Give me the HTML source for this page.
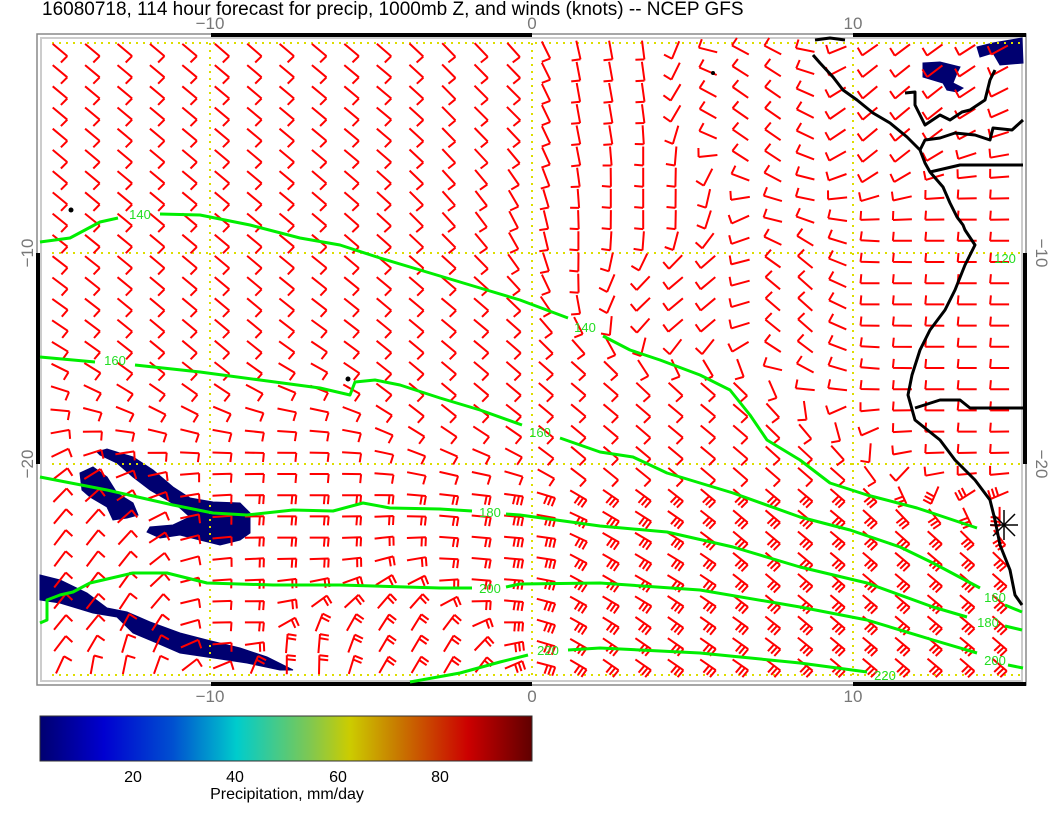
<!DOCTYPE html>
<html><head><meta charset="utf-8"><style>
html,body{margin:0;padding:0;background:#fff;width:1056px;height:816px;overflow:hidden;font-family:"Liberation Sans",sans-serif}
svg{position:absolute;left:0;top:0}
</style></head><body>
<svg id="s" width="1056" height="816" viewBox="0 0 1056 816" xmlns="http://www.w3.org/2000/svg">
<defs><linearGradient id="cb" x1="0" x2="1" y1="0" y2="0">
<stop offset="0" stop-color="#000070"/><stop offset="0.13" stop-color="#0000d0"/><stop offset="0.27" stop-color="#0050d0"/><stop offset="0.4" stop-color="#00cccc"/><stop offset="0.55" stop-color="#80c850"/><stop offset="0.63" stop-color="#cccc00"/><stop offset="0.72" stop-color="#c88000"/><stop offset="0.87" stop-color="#cc0000"/><stop offset="1" stop-color="#600000"/></linearGradient></defs>
<text x="42" y="15" font-size="19" fill="#000">16080718, 114 hour forecast for precip, 1000mb Z, and winds (knots) -- NCEP GFS</text>
<g font-size="17" fill="#777" text-anchor="middle">
<text x="210" y="29">−10</text><text x="532" y="29">0</text><text x="853" y="29">10</text>
<text x="210" y="702">−10</text><text x="532" y="702">0</text><text x="853" y="702">10</text>
<text transform="translate(33,253) rotate(-90)">−10</text><text transform="translate(33,464) rotate(-90)">−20</text>
<text transform="translate(1036,253) rotate(90)">−10</text><text transform="translate(1036,464) rotate(90)">−20</text>
</g>
<rect x="37" y="34" width="989" height="651" fill="none" stroke="#888" stroke-width="1.5"/>
<rect x="41" y="38" width="981" height="643" fill="none" stroke="#ccc" stroke-width="2"/>
<g fill="#000"><rect x="211" y="33" width="321" height="4"/><rect x="853" y="33" width="173" height="4"/>
<rect x="211" y="682" width="321" height="4"/><rect x="853" y="682" width="173" height="4"/>
<rect x="36" y="253" width="4" height="211"/><rect x="1023" y="253" width="4" height="211"/></g>
<g fill="#000070" stroke="#000070">
<polygon points="97,452 107,449 133,457 153,470 173,487 190,498 213,502 240,503 250,513 250,533 240,540 220,545 200,540 180,535 160,538 147,532 150,527 173,525 190,517 180,508 167,500 150,490 133,477 117,463 100,455"/>
<polygon points="80,473 93,467 107,477 117,493 133,503 138,515 127,518 113,520 107,507 90,497 82,490"/>
<polygon points="40,575 60,580 87,593 107,608 127,612 150,622 180,633 207,640 240,648 267,657 293,670 280,670 247,663 207,657 180,653 157,643 133,633 117,617 93,613 60,603 40,600"/>
<polygon points="923,63 940,62 960,67 957,73 953,83 963,88 957,92 947,90 943,83 933,80 923,77"/>
<polygon points="977,47 993,43 1022,38 1023,63 1000,65 993,53 980,57"/>
</g>
<g stroke="#dddd00" stroke-width="2" stroke-dasharray="2,5" fill="none">
<line x1="52" y1="43" x2="1020" y2="43"/><line x1="52" y1="253" x2="1020" y2="253"/><line x1="52" y1="464" x2="1020" y2="464"/><line x1="52" y1="675" x2="1020" y2="675"/>
<line x1="210" y1="43" x2="210" y2="675"/><line x1="532" y1="43" x2="532" y2="675"/><line x1="853" y1="43" x2="853" y2="675"/>
</g>
<g id="barbs" stroke="#ff0000" stroke-width="2" fill="none"></g>
<g stroke="#00ee00" stroke-width="3" fill="none" stroke-linejoin="round">
<polyline points="40,242 70,238 100,222 118,218"/>
<polyline points="160,214 200,215 250,225 300,238 340,245 380,258 420,270 470,285 520,300 568,318"/>
<polyline points="603,336 630,350 660,360 700,375 730,390 750,415 767,440 800,460 830,483 867,495 917,508 977,528"/>
<polyline points="40,357 95,362"/>
<polyline points="135,365 200,372 260,380 320,388 350,395 355,382 375,380 400,385 440,398 480,410 522,425"/>
<polyline points="560,438 600,452 633,457 667,473 733,493 800,517 850,530 900,547 933,563 980,588"/>
<polyline points="1005,605 1022,612"/>
<polyline points="40,477 107,490 173,505 213,513 247,515 293,510 333,511 363,503 390,508 440,509 472,511"/>
<polyline points="506,514 520,515 600,526 667,532 733,547 800,567 867,583 933,607 967,617"/>
<polyline points="1005,626 1022,630"/>
<polyline points="40,623 47,620 47,600 60,595 73,592 90,583 133,573 167,573 207,583 273,585 340,585 440,588 472,588"/>
<polyline points="506,587 520,584 600,583 700,590 800,607 867,620 933,640 977,653"/>
<polyline points="1008,665 1023,668"/>
<polyline points="410,682 460,673 500,662 528,655"/>
<polyline points="568,650 600,648 700,653 800,663 867,672"/>
</g>
<g fill="#22dd22" font-size="13" text-anchor="middle">
<text x="140" y="219">140</text><text x="585" y="332">140</text><text x="115" y="365">160</text><text x="540" y="437">160</text>
<text x="490" y="517">180</text><text x="490" y="593">200</text><text x="548" y="655">220</text>
<text x="1005" y="263">120</text><text x="995" y="602">160</text><text x="988" y="627">180</text><text x="995" y="665">200</text><text x="885" y="680">220</text>
</g>
<g stroke="#000" stroke-width="3" fill="none" stroke-linejoin="round">
<polyline points="813,55 820,63 833,77 843,90 857,100 873,113 890,123 907,137 920,150 925,163 930,172 943,187 950,203 957,217 963,225 965,230 975,245 965,265 955,290 945,310 930,330 920,350 912,375 908,395 915,420 940,440 955,460 975,480 990,500 995,520 1000,545 1010,570 1015,595 1022,605"/>
<polyline points="930,172 960,165 1023,165"/>
<polyline points="920,150 925,140 940,138 955,133 975,135 990,140 993,128 1012,130 1023,120"/>
<polyline points="905,93 915,92 915,105 920,115 925,125 940,115 950,120 962,112 970,110 985,100 990,80 995,70"/>
<polyline points="915,408 940,400 960,400 970,408 1023,408"/>
<polyline points="815,40 830,38 845,40"/>
</g>
<g stroke="#000" stroke-width="1.5"><line x1="990" y1="525" x2="1018" y2="525"/><line x1="1004" y1="510" x2="1004" y2="540"/><line x1="993" y1="514" x2="1015" y2="536"/><line x1="993" y1="536" x2="1015" y2="514"/></g>
<circle cx="71" cy="210" r="2.5" fill="#000"/><circle cx="348" cy="379" r="2.5" fill="#000"/><circle cx="713" cy="73" r="2" fill="#000"/>
<rect x="40" y="716" width="492" height="45" fill="url(#cb)" stroke="#333" stroke-width="1"/>
<g font-size="16" fill="#000" text-anchor="middle"><text x="133" y="782">20</text><text x="235" y="782">40</text><text x="338" y="782">60</text><text x="440" y="782">80</text>
<text x="287" y="799">Precipitation, mm/day</text></g>
</svg>
<script>
var C=[[100,100,40],[350,100,40],[500,100,45],[590,100,80],[650,200,90],[690,300,140],[760,120,215],[800,300,222],[880,120,140],[880,300,180],[960,250,180],[960,400,180],[200,300,40],[450,350,40],[600,420,40],[700,420,40],[300,520,0],[500,550,5],[250,620,0],[620,580,30],[800,520,40],[920,600,40],[650,650,35],[80,630,-50],[100,665,-80],[290,665,-90],[420,665,-60]];
var g=document.getElementById('barbs'),h='';
for(var r=0;r<30;r++)for(var c=0;c<30;c++){var x=60+c*32.4,y=50+r*21.2;var sx=0,sy=0;
for(var i=0;i<C.length;i++){var dx=x-C[i][0],dy=y-C[i][1],w=1/(dx*dx+dy*dy+100);w*=w;var a=C[i][2]*Math.PI/180;sx+=w*Math.cos(a);sy+=w*Math.sin(a);}
var t=Math.atan2(sy,sx),L=19,ex=x+L*Math.cos(t)/2,ey=y+L*Math.sin(t)/2,bx=x-L*Math.cos(t)/2,by=y-L*Math.sin(t)/2;
var n=(y>480&&x>500)?3:(y>480&&x>250)?2:1;var b=t+1.66,d='M'+bx.toFixed(1)+' '+by.toFixed(1)+'L'+ex.toFixed(1)+' '+ey.toFixed(1);
for(var k=0;k<n;k++){var px=ex-k*4*Math.cos(t),py=ey-k*4*Math.sin(t);d+='M'+px.toFixed(1)+' '+py.toFixed(1)+'l'+(9*Math.cos(b)).toFixed(1)+' '+(9*Math.sin(b)).toFixed(1);}
h+='<path d="'+d+'"/>';}
g.innerHTML=h;
</script>
</body></html>
